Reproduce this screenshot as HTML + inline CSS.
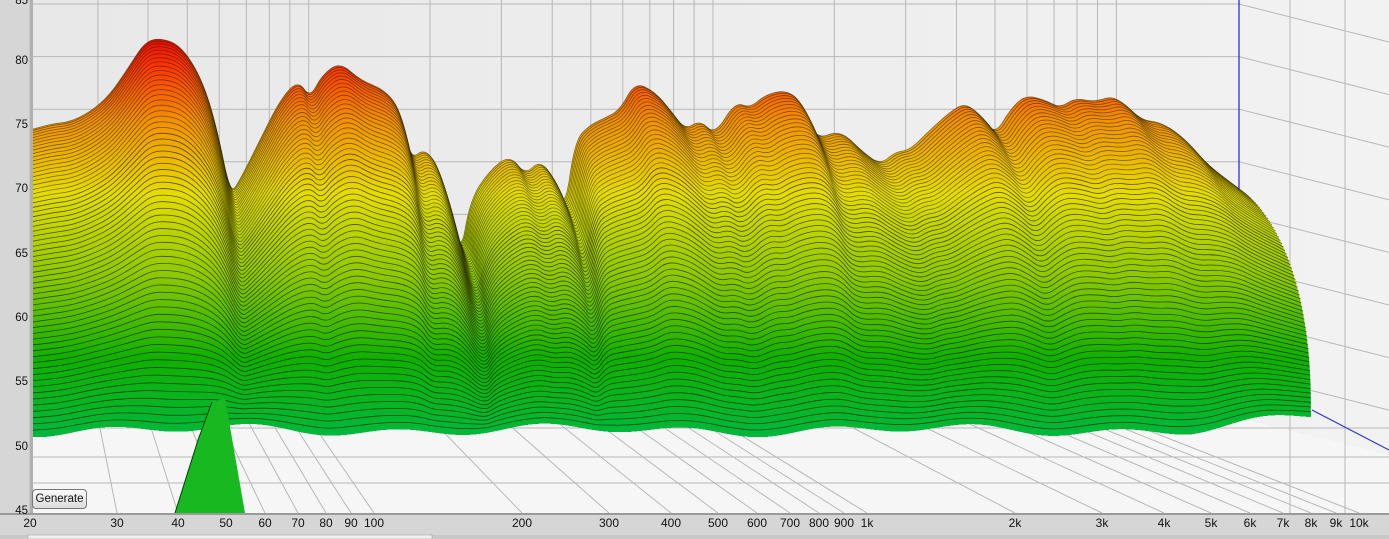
<!DOCTYPE html>
<html><head><meta charset="utf-8"><style>
html,body{margin:0;padding:0;background:#d6d6d6;overflow:hidden}
#wrap{position:relative;width:1389px;height:539px;font-family:"Liberation Sans",sans-serif;font-size:12px}
.yl{position:absolute;left:6px;width:22px;text-align:right;color:#111;font-size:11.5px}
.xl{position:absolute;top:516px;color:#111;font-size:12px;transform:translateX(-50%)}
#btn{position:absolute;left:32px;top:489px;width:55px;height:20px;border:1px solid #777;border-radius:4px;background:linear-gradient(#fafafa,#dcdcdc);font-size:11.5px;text-align:center;line-height:19px;color:#111;box-sizing:border-box}
</style></head><body><div id="wrap">
<svg id="s" width="1389" height="539" style="position:absolute;left:0;top:0">
<defs>
<linearGradient id="g" gradientUnits="userSpaceOnUse" x1="0" y1="30" x2="0" y2="440">
<stop offset="0" stop-color="#e00000"/><stop offset="0.08" stop-color="#ff3000"/><stop offset="0.22" stop-color="#f39000"/><stop offset="0.4" stop-color="#e6dc00"/><stop offset="0.6" stop-color="#8cc800"/><stop offset="0.8" stop-color="#10b000"/><stop offset="1" stop-color="#00b840"/>
</linearGradient>
<linearGradient id="bg" x1="0" x2="1" y1="0" y2="0"><stop offset="0" stop-color="#e8e8e8"/><stop offset="1" stop-color="#f2f2f2"/></linearGradient>
</defs>
<rect x="30" y="0" width="1359" height="513" fill="url(#bg)"/>
<polygon points="30,418 1239,418 1389,455 1389,513 30,513" fill="#f6f6f6"/>
<g id="grid" stroke="#b8b8b8" stroke-width="1" fill="none"></g>
<g id="surf"></g>
<line x1="1239" y1="0" x2="1239" y2="190" stroke="#2020d0" stroke-width="1.2"/>
<line x1="1312" y1="410" x2="1389" y2="450" stroke="#3030e0" stroke-width="1.2"/>
<rect x="30" y="0" width="3" height="513" fill="#b0b0b0"/>
<rect x="0" y="513" width="1389" height="2" fill="#9a9a9a"/>
<rect x="0" y="535" width="1389" height="4" fill="#c8c8c8"/>
<rect x="28" y="535" width="404" height="4" fill="#f0f0f0" stroke="#999" stroke-width="0.5"/>
</svg>
<div class="yl" style="top:-5px">85</div><div class="yl" style="top:55px">80</div><div class="yl" style="top:119px">75</div><div class="yl" style="top:183px">70</div><div class="yl" style="top:248px">65</div><div class="yl" style="top:312px">60</div><div class="yl" style="top:376px">55</div><div class="yl" style="top:441px">50</div><div class="yl" style="top:505px">45</div>
<div id="xls"></div>
<div id="btn">Generate</div>
</div>
<script>
var NS="http://www.w3.org/2000/svg";
function el(t,a,p){var e=document.createElementNS(NS,t);for(var k in a)e.setAttribute(k,a[k]);p.appendChild(e);return e;}
var grid=document.getElementById('grid');
var fx=[[20,30],[30,117],[40,178],[50,226],[60,265],[70,298],[80,326],[90,351],[100,374],[200,522],[300,609],[400,671],[500,718],[600,757],[700,790],[800,819],[900,844],['1k',867],['2k',1015],['3k',1102],['4k',1164],['5k',1211],['6k',1250],['7k',1283],['8k',1311],['9k',1336],['10k',1359]];
var h='';
fx.forEach(function(f){h+='<div class="xl" style="left:'+f[1]+'px">'+f[0]+'</div>';
 var bx=2+0.82*f[1]; if(bx<30)bx=30;
 if(bx<1239) el('line',{x1:bx,y1:0,x2:bx,y2:418},grid);
 el('line',{x1:bx,y1:418,x2:f[1],y2:513},grid);});
document.getElementById('xls').innerHTML=h;
for(var i=0;i<9;i++){var y=4+52.6*i;if(y<=418){el('line',{x1:30,y1:y,x2:1239,y2:y},grid);el('line',{x1:1239,y1:y,x2:1389,y2:y+38},grid);}}
[428,457,483].forEach(function(y){el('line',{x1:30,y1:y,x2:1389,y2:y},grid);});
[1290,1345].forEach(function(x){el('line',{x1:x,y1:0,x2:x,y2:513},grid);});
var P=[[30,130],[50,124],[70,122],[90,112],[110,95],[130,65],[145,42],[160,38],[180,45],[200,75],[215,120],[230,195],[240,180],[260,140],[280,100],[298,80],[310,98],[322,75],[340,62],[360,80],[385,90],[400,110],[410,160],[425,148],[440,170],[460,260],[470,200],[490,170],[510,155],[525,175],[540,160],[555,180],[565,210],[575,140],[590,125],[605,118],[620,110],[635,82],[655,92],[670,110],[685,130],[700,120],[715,135],[735,102],[750,108],[765,95],[785,90],[800,100],[815,140],[840,130],[860,150],[880,165],[895,152],[910,150],[930,130],[950,112],[965,103],[980,115],[995,135],[1010,110],[1025,95],[1045,100],[1060,108],[1075,98],[1095,102],[1115,95],[1140,120],[1160,122],[1180,135],[1200,160],[1239,190]];
function fy(x){
 var b=428+4*Math.sin(x/23)+3*Math.sin(x/57+1);
 if(x>1190) b-= (x-1190)*0.1;
 return b;}
function smooth(pts){
 var s='M'+pts[0][0].toFixed(1)+','+pts[0][1].toFixed(1);
 for(var i=1;i<pts.length-1;i++){var mx=(pts[i][0]+pts[i+1][0])/2,my=(pts[i][1]+pts[i+1][1])/2;
  s+='Q'+pts[i][0].toFixed(1)+','+pts[i][1].toFixed(1)+' '+mx.toFixed(1)+','+my.toFixed(1);}
 var l=pts[pts.length-1];s+='L'+l[0].toFixed(1)+','+l[1].toFixed(1);return s;}
var surf=document.getElementById('surf');
var N=62;
for(var k=0;k<=N;k++){
 var t=Math.pow(k/N,1.3);
 var u=k/N;
 var dx=72*(1-Math.pow(1-u,2.2));
 var pts=P.map(function(p){var x=p[0]+dx*(p[0]-30)/1209;var y=p[1]+(fy(x)-p[1])*t*0.985;return [x,y];});
 pts[0][0]=30;
 var s=smooth(pts);
 var last=pts[pts.length-1];
 var bot='';for(var x=Math.floor(last[0]);x>=30;x-=8){bot+='L'+x+','+(fy(x)+2).toFixed(1);}
 el('path',{d:s+bot+'L30,'+(fy(30)+2)+'Z',fill:'url(#g)'},surf);
 el('path',{d:s,fill:'none',stroke:'#1a1a00','stroke-opacity':k<N/3?0.55:0.7,'stroke-width':0.8},surf);
}
el('polygon',{points:'175,513 245,513 225,398 212,402 198,440',fill:'#18b820'},surf);
el('path',{d:'M212,402 L198,440 L175,513',fill:'none',stroke:'#004000','stroke-width':1},surf);
</script>
</body></html>
